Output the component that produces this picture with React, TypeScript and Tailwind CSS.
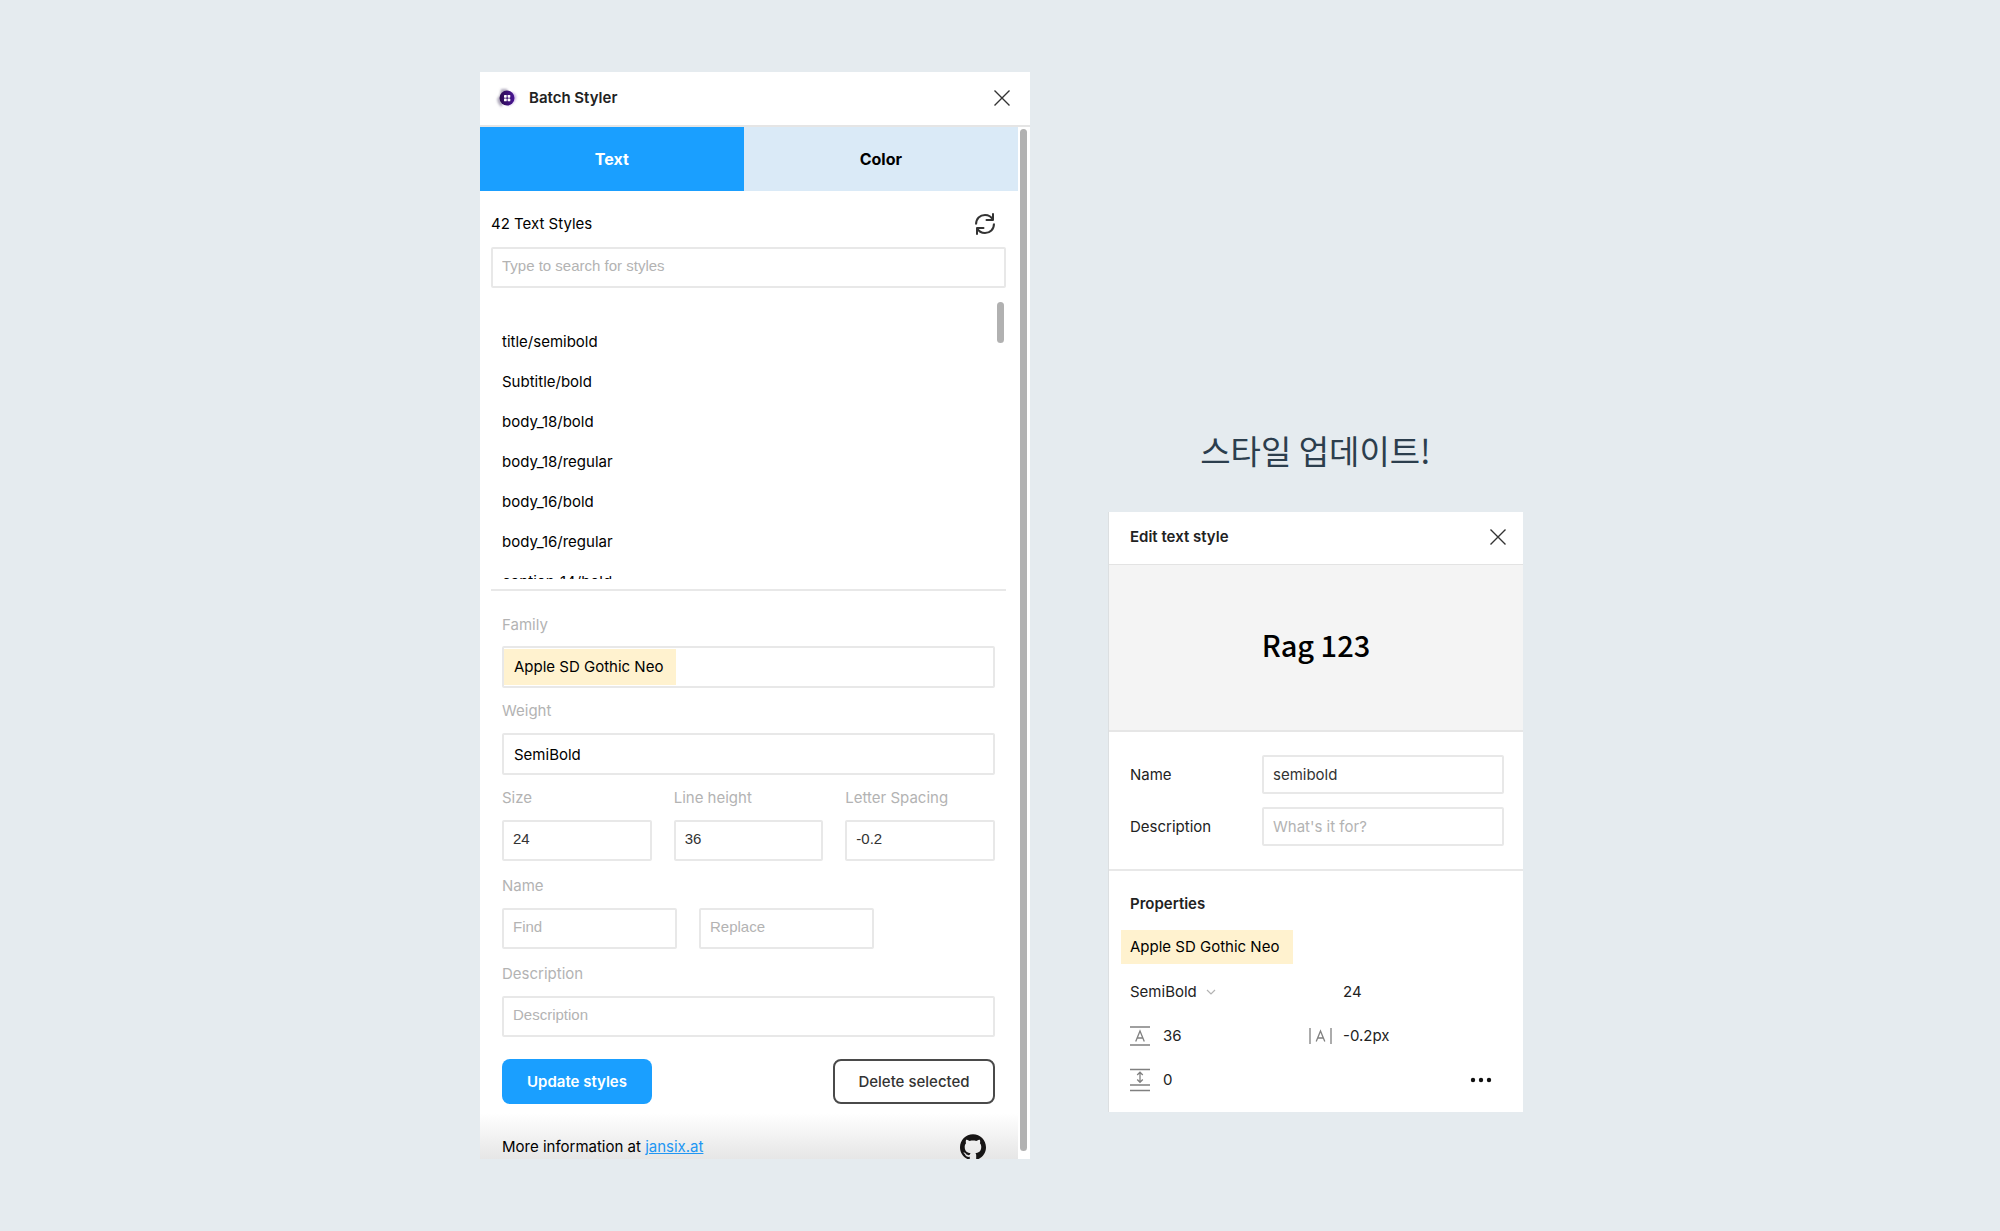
import React from 'react';
import { SiGithub } from 'react-icons/si';

const styleNames = [
  'title/semibold',
  'Subtitle/bold',
  'body_18/bold',
  'body_18/regular',
  'body_16/bold',
  'body_16/regular',
  'caption_14/bold',
];

const CloseIcon = () => (
  <svg width="18" height="18" viewBox="0 0 18 18" fill="none" stroke="#333" strokeWidth="1.4">
    <path d="M1.5 1.5l15 15M16.5 1.5l-15 15" />
  </svg>
);

const LogoIcon = () => (
  <svg width="20" height="20" viewBox="0 0 20 20" className="overflow-visible">
    <defs>
      <linearGradient id="logo-fill" x1="0" y1="0" x2="1" y2="0">
        <stop offset="0" stopColor="#2a0a4f" />
        <stop offset="1" stopColor="#4a1695" />
      </linearGradient>
      <filter id="logo-blur" x="-30%" y="-30%" width="160%" height="160%">
        <feGaussianBlur stdDeviation="0.8" />
      </filter>
    </defs>
    <g filter="url(#logo-blur)">
      <path d="M4 1h6l2 6-8 12-3-4L0 11l3-4z" fill="#8f86a0" opacity="0.7" />
      <path d="M14 4c4 1 6 4 5 7-2 4-5 7-9 7z" fill="#b79ad8" opacity="0.7" />
    </g>
    <circle cx="10" cy="10" r="7.5" fill="url(#logo-fill)" />
    <g fill="#fff">
      <rect x="7" y="7" width="2.7" height="2.7" rx="0.6" />
      <rect x="10.6" y="7" width="2.7" height="2.7" rx="0.6" />
      <rect x="7" y="10.6" width="2.7" height="2.7" rx="0.6" />
      <rect x="10.6" y="10.6" width="2.7" height="2.7" rx="0.6" />
    </g>
  </svg>
);

const RefreshIcon = () => (
  <svg width="20" height="22" viewBox="0 0 20 22" fill="none" stroke="#333" strokeWidth="2">
    <path d="M1 11.5C1 5.5 5 2 10 2c3.6 0 6.5 2 8 5" />
    <path d="M18 1v6h-6.5" strokeLinecap="round" strokeLinejoin="round" />
    <path d="M19 10.5C19 16.5 15 20 10 20c-3.6 0-6.5-2-8-5" />
    <path d="M2 21v-6h6.5" strokeLinecap="round" strokeLinejoin="round" />
  </svg>
);

const LineHeightIcon = () => (
  <svg width="20" height="20" viewBox="0 0 20 20" fill="none" stroke="#808080" strokeWidth="1.3">
    <path d="M0 1h20M0 19h20" />
    <path d="M5.7 15.5L10 5l4.3 10.5M7.2 12h5.6" />
  </svg>
);

const LetterSpacingIcon = () => (
  <svg width="24" height="18" viewBox="0 0 24 18" fill="none" stroke="#808080" strokeWidth="1.3">
    <path d="M1 1v16M22 1v16" />
    <path d="M7.2 14.5L11.5 4l4.3 10.5M8.7 11h5.6" />
  </svg>
);

const ParagraphSpacingIcon = () => (
  <svg width="20" height="24" viewBox="0 0 20 24" fill="none" stroke="#808080" strokeWidth="1.3">
    <path d="M0 1.5h20M0 17h20M0 22.5h20" />
    <path d="M10 4.5v9.5M7.2 7L10 4.2 12.8 7M7.2 11.5l2.8 2.8 2.8-2.8" />
  </svg>
);

const inputClass =
  'block w-full rounded-xs border-2 border-[#e8e8e8] bg-white text-[#333] placeholder-[#b3b3b3] outline-none';

const plainInputClass = `${inputClass} h-[41px] px-[9px] pb-[5px] font-['Liberation_Sans',sans-serif]`;

type FieldProps = {
  id: string;
  label: string;
  value?: string;
  placeholder?: string;
};

const Field = ({ id, label, value, placeholder }: FieldProps) => (
  <div>
    <label htmlFor={id} className="mb-[10px] block text-[#b3b3b3]">{label}</label>
    <input id={id} defaultValue={value} placeholder={placeholder} className={plainInputClass} />
  </div>
);

const BatchStyler = () => (
  <section className="w-full max-w-[550px] overflow-hidden bg-white">
    <header className="flex h-[55px] items-center border-b-2 border-[#e5e5e5] pb-[2px] pl-[17px] pr-[19px]">
      <LogoIcon />
      <h1 className="ml-3 flex-1 font-semibold text-[#222]">Batch Styler</h1>
      <button aria-label="Close"><CloseIcon /></button>
    </header>

    <div className="flex">
      <div className="min-w-0 flex-1">
        <div className="flex h-16 text-base">
          <button className="w-[49%] bg-[#1a9fff] pb-px font-bold text-white">Text</button>
          <button className="flex-1 bg-[#daeaf7] pb-px font-bold text-black">Color</button>
        </div>

        <div className="pl-[11px] pr-3 pt-[21px]">
          <div className="mb-[11px] flex h-6 items-center justify-between pr-[11px] text-black">
            <label htmlFor="search">42 Text Styles</label>
            <button aria-label="Refresh"><RefreshIcon /></button>
          </div>
          <input id="search" placeholder="Type to search for styles" className={plainInputClass} />

          <div className="mt-[13px] flex h-[278px] justify-between overflow-hidden">
            <ul className="pl-[11px] pt-[21px] text-black">
              {styleNames.map((name) => (
                <li key={name} className="flex h-10 items-center">{name}</li>
              ))}
            </ul>
            <div className="mr-[2px] mt-px h-[41px] w-[7px] rounded-full bg-[#b1b1b1]" />
          </div>
        </div>

        <hr className="ml-[11px] mr-3 mt-[10px] border-t-2 border-[#e8e8e8]" />

        <form className="pl-[22px] pr-[23px] pt-[22px]">
          <label htmlFor="family" className="block text-[#b3b3b3]">Family</label>
          <div className="mt-[9px] flex h-[42px] rounded-xs border-2 border-[#e8e8e8] pb-px pt-px">
            <input
              id="family"
              defaultValue="Apple SD Gothic Neo"
              className="w-[172px] bg-[#fff2cf] pl-[10px] text-black outline-none"
            />
          </div>

          <label htmlFor="weight" className="mt-[11px] block text-[#b3b3b3]">Weight</label>
          <input
            id="weight"
            defaultValue="SemiBold"
            className="mt-[10px] block h-[42px] w-full rounded-xs border-2 border-[#e8e8e8] px-[10px] text-black outline-none"
          />

          <div className="mt-[11px] grid grid-cols-3 gap-[22px]">
            <Field id="size" label="Size" value="24" />
            <Field id="line-height" label="Line height" value="36" />
            <Field id="letter-spacing" label="Letter Spacing" value="-0.2" />
          </div>

          <fieldset className="mt-[13px]">
            <legend className="text-[#b3b3b3]">Name</legend>
            <div className="mt-[10px] flex gap-[22px] pr-[121px]">
              <input aria-label="Find" placeholder="Find" className={plainInputClass} />
              <input aria-label="Replace" placeholder="Replace" className={plainInputClass} />
            </div>
          </fieldset>

          <div className="mt-[13px]">
            <Field id="description" label="Description" placeholder="Description" />
          </div>

          <div className="mt-[22px] flex justify-between">
            <button type="button" className="h-[45px] w-[150px] rounded-lg bg-[#1a9fff] font-semibold text-white">
              Update styles
            </button>
            <button type="button" className="h-[45px] w-[162px] rounded-lg border-2 border-[#4a4a4a] font-medium text-[#333]">
              Delete selected
            </button>
          </div>
        </form>

        <footer className="mt-[9px] flex h-[46px] items-start justify-between overflow-hidden bg-linear-to-b from-white to-[#e6e6e6] pl-[22px] pr-8 pt-[21px] text-black">
          <p className="pt-px">
            More information at <a href="#" className="text-[#2196f3] underline">jansix.at</a>
          </p>
          <SiGithub size={26} className="shrink-0 text-[#171515]" />
        </footer>
      </div>

      <div className="flex w-3 flex-col bg-white pb-2 pl-[2px] pr-[3px] pt-[2px]">
        <div className="flex-1 rounded-full bg-[#b1b1b1]" />
      </div>
    </div>
  </section>
);

const EditTextStyle = () => (
  <section className="w-full border-l border-[#dcdfe1] bg-white text-[#222]">
    <header className="flex h-[53px] items-center justify-between border-b border-[#e3e3e3] pb-[2px] pl-[21px] pr-4">
      <h2 className="font-semibold">Edit text style</h2>
      <button aria-label="Close"><CloseIcon /></button>
    </header>

    <div className="flex h-[167px] items-center justify-center border-b-2 border-[#e6e6e6] bg-[#f4f4f4] pb-2 font-['Noto_Sans_CJK_KR',sans-serif] text-[29px] font-medium text-black">
      Rag 123
    </div>

    <div className="grid grid-cols-[132px_1fr] items-center gap-y-[13px] border-b-2 border-[#e8e8e8] pb-[23px] pl-[21px] pr-[19px] pt-[23px]">
      <label htmlFor="style-name">Name</label>
      <input id="style-name" defaultValue="semibold" className={`${inputClass} h-[39px] px-[9px]`} />
      <label htmlFor="style-description">Description</label>
      <input id="style-description" placeholder="What's it for?" className={`${inputClass} h-[39px] px-[9px]`} />
    </div>

    <div className="pb-[10px] pl-3 pr-[31px] pt-[21px]">
      <h3 className="pl-[9px] font-semibold">Properties</h3>
      <div className="mt-[14px] flex h-[34px] w-[172px] items-center bg-[#fff2cf] pl-[9px] text-black">
        Apple SD Gothic Neo
      </div>
      <div className="mt-[6px] grid grid-cols-[179px_1fr] pl-[9px]">
        <button className="flex h-11 items-center gap-[9px]">
          SemiBold
          <svg width="10" height="6" viewBox="0 0 10 6" fill="none" stroke="#b3b3b3" strokeWidth="1.2">
            <path d="M1 1l4 4 4-4" />
          </svg>
        </button>
        <div className="flex h-11 items-center pl-[34px]">24</div>
        <div className="flex h-11 items-center gap-[13px]">
          <LineHeightIcon />
          36
        </div>
        <div className="flex h-11 items-center gap-[10px]">
          <LetterSpacingIcon />
          -0.2px
        </div>
        <div className="flex h-11 items-center gap-[13px]">
          <ParagraphSpacingIcon />
          0
        </div>
        <div className="flex h-11 items-center justify-end">
          <button aria-label="More options">
            <svg width="22" height="6" viewBox="0 0 22 6" fill="#111">
              <circle cx="3" cy="3" r="2.2" />
              <circle cx="11" cy="3" r="2.2" />
              <circle cx="19" cy="3" r="2.2" />
            </svg>
          </button>
        </div>
      </div>
    </div>
  </section>
);

const App = () => {
  return (
    <main className="flex min-h-screen items-start justify-center gap-[78px] bg-[#e5ebef] pb-[71px] pl-[3px] pt-[72px] font-['Inter','Noto_Sans_CJK_KR',sans-serif] text-[15px] leading-6">
      <BatchStyler />
      <div className="flex w-full max-w-[415px] flex-col items-center self-end pb-12">
        <p className="mb-[38px] font-['Noto_Sans_CJK_KR',sans-serif] text-[33px] font-normal leading-[48px] text-[#2c3e4d]">
          스타일 업데이트!
        </p>
        <EditTextStyle />
      </div>
    </main>
  );
};

export default App;
